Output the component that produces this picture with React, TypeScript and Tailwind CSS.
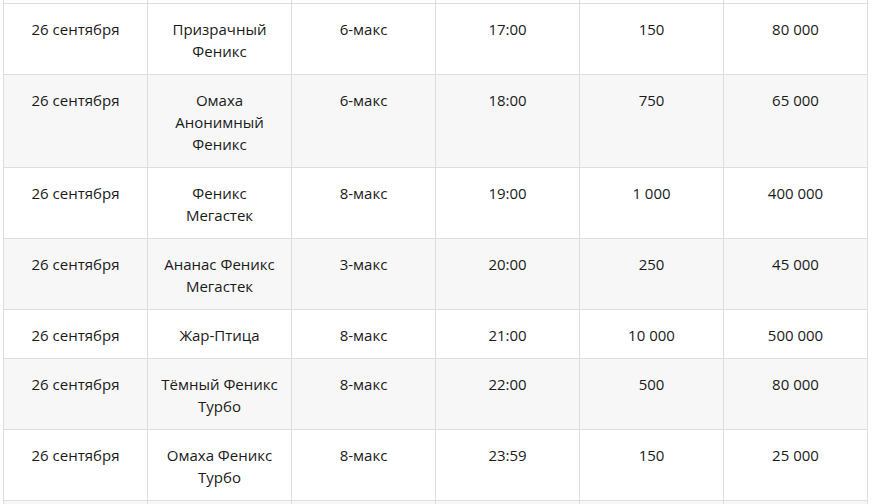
import React from "react";

const rows: { name: string; type: string; time: string; buyin: string; prize: string }[] = [
  { name: "Призрачный Феникс", type: "6-макс", time: "17:00", buyin: "150", prize: "80 000" },
  { name: "Омаха Анонимный Феникс", type: "6-макс", time: "18:00", buyin: "750", prize: "65 000" },
  { name: "Феникс Мегастек", type: "8-макс", time: "19:00", buyin: "1 000", prize: "400 000" },
  { name: "Ананас Феникс Мегастек", type: "3-макс", time: "20:00", buyin: "250", prize: "45 000" },
  { name: "Жар-Птица", type: "8-макс", time: "21:00", buyin: "10 000", prize: "500 000" },
  { name: "Тёмный Феникс Турбо", type: "8-макс", time: "22:00", buyin: "500", prize: "80 000" },
  { name: "Омаха Феникс Турбо", type: "8-макс", time: "23:59", buyin: "150", prize: "25 000" },
];

const cell = "border border-[#dedede] px-[10px] pt-[14px] pb-[12px] align-top text-center leading-[22px]";
const edge = "border-x border-[#dedede] p-0";

export default function App() {
  return (
    <div
      className="h-[504px] w-[874px] overflow-hidden bg-white pl-[3px] text-[15px] text-[#1a1a1a]"
      style={{ fontFamily: '"Open Sans", "Noto Sans", sans-serif' }}
    >
      <table className="table-fixed border-collapse w-[865px]">
        <colgroup>
          <col className="w-[144px]" />
          <col className="w-[144px]" />
          <col className="w-[144px]" />
          <col className="w-[144px]" />
          <col className="w-[144px]" />
          <col className="w-[144px]" />
        </colgroup>
        <tbody>
          <tr className="h-[3px] bg-white">
            {[0, 1, 2, 3, 4, 5].map((i) => (
              <td key={i} className={edge}></td>
            ))}
          </tr>
          {rows.map((r, i) => (
            <tr key={i} className={i % 2 === 1 ? "bg-[#f7f7f7]" : "bg-white"}>
              <td className={cell}>26 сентября</td>
              <td className={cell}>{r.name}</td>
              <td className={cell}>{r.type}</td>
              <td className={cell}>{r.time}</td>
              <td className={cell}>{r.buyin}</td>
              <td className={cell}>{r.prize}</td>
            </tr>
          ))}
          <tr className="bg-[#f7f7f7]">
            {[0, 1, 2, 3, 4, 5].map((i) => (
              <td key={i} className={cell}>&nbsp;</td>
            ))}
          </tr>
        </tbody>
      </table>
    </div>
  );
}
